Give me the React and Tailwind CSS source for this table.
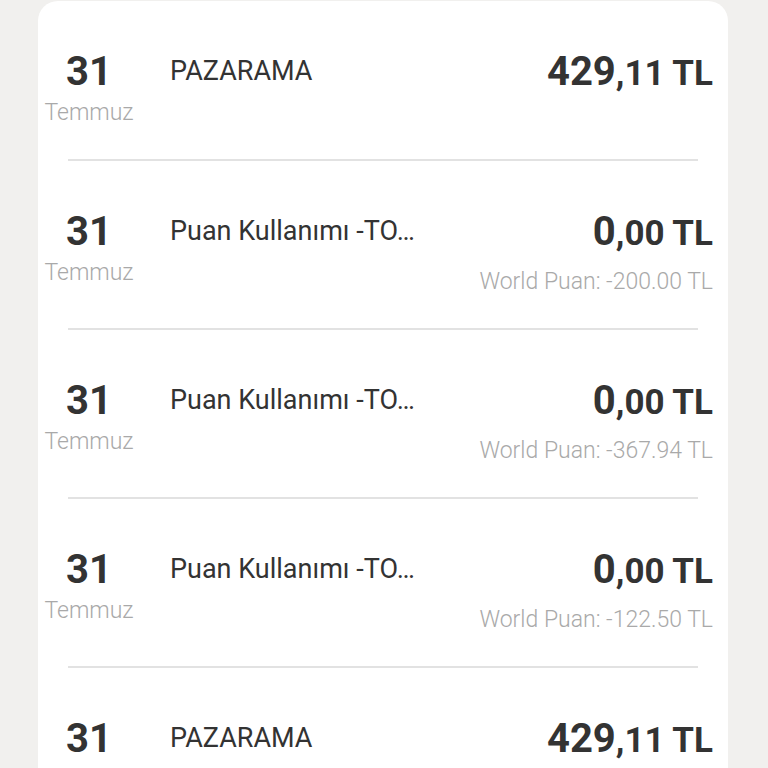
const rows = [
  { day: '31', month: 'Temmuz', title: 'PAZARAMA', whole: '429', cents: ',11 TL' },
  { day: '31', month: 'Temmuz', title: 'Puan Kullanımı -TO…', whole: '0', cents: ',00 TL', points: 'World Puan: -200.00 TL' },
  { day: '31', month: 'Temmuz', title: 'Puan Kullanımı -TO…', whole: '0', cents: ',00 TL', points: 'World Puan: -367.94 TL' },
  { day: '31', month: 'Temmuz', title: 'Puan Kullanımı -TO…', whole: '0', cents: ',00 TL', points: 'World Puan: -122.50 TL' },
  { day: '31', month: 'Temmuz', title: 'PAZARAMA', whole: '429', cents: ',11 TL' },
];

function Transaction({ row, last }) {
  return (
    <div>
      <div className="flex items-start pt-[49px] pb-[32px] pr-[15px]">
        {/* tarih */}
        <div className="ml-[6px] w-[90px] shrink-0 text-center">
          <div className="text-[40px] leading-[44px] font-bold text-[#333333]">{row.day}</div>
          <div className="mt-[5px] text-[23px] leading-[28px] font-light text-[#a9a9a9]">{row.month}</div>
        </div>

        <div className="ml-[36px] pt-[5px] text-[27px] leading-[32px] text-[#333333] whitespace-nowrap">
          {row.title}
        </div>

        {/* tutar */}
        <div className="ml-auto text-right">
          <div className="text-[40px] leading-[44px] font-bold text-[#333333] whitespace-nowrap">
            {row.whole}
            <span className="text-[35px] leading-none">{row.cents}</span>
          </div>
          {row.points && (
            <div className="mt-[14px] text-[23px] leading-[28px] font-light text-[#a9a9a9] whitespace-nowrap">
              {row.points}
            </div>
          )}
        </div>
      </div>
      {!last && <div className="mx-[30px] h-[2px] bg-[#e2e2e2]" />}
    </div>
  );
}

export default function App() {
  return (
    <div
      className="min-h-screen bg-[#f1f0ee] pt-[1px]"
      style={{ fontFamily: 'Roboto, "Noto Sans", sans-serif' }}
    >
      <div className="ml-[38px] w-[690px] rounded-t-[20px] bg-white">
        {rows.map((row, i) => (
          <Transaction key={i} row={row} last={i === rows.length - 1} />
        ))}
      </div>
    </div>
  );
}
